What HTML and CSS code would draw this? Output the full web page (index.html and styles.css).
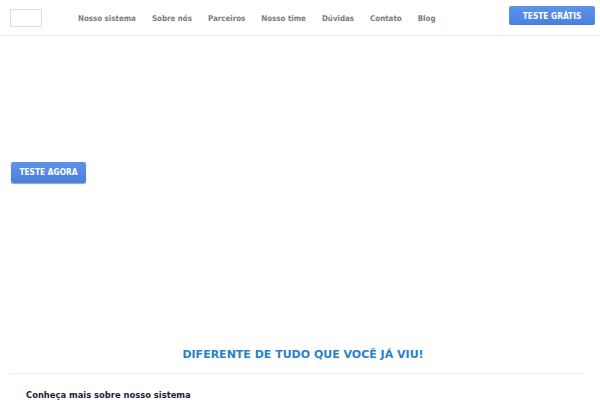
FILE: index.html
```html
<!DOCTYPE html>
<html lang="pt-BR">
<head>
<meta charset="utf-8">
<link rel="stylesheet" href="styles.css">
</head>
<body>
<header class="header">
  <div class="logo"></div>
  <nav class="nav">
    <a href="#">Nosso sistema</a>
    <a href="#">Sobre nós</a>
    <a href="#">Parceiros</a>
    <a href="#">Nosso time</a>
    <a href="#">Dúvidas</a>
    <a href="#">Contato</a>
    <a href="#">Blog</a>
  </nav>
  <a class="btn btn-top" href="#">TESTE GRÁTIS</a>
</header>
<section class="hero">
  <a class="btn btn-hero" href="#">TESTE AGORA</a>
</section>
<section class="intro">
  <h2 class="title">DIFERENTE DE TUDO QUE VOCÊ JÁ VIU!</h2>
  <div class="divider"></div>
  <h3 class="subtitle">Conheça mais sobre nosso sistema</h3>
</section>
</body>
</html>
```
FILE: styles.css
```css
* { box-sizing: border-box; }
html, body { margin: 0; padding: 0; background: #fff; }
body { font-family: "DejaVu Sans Condensed", "DejaVu Sans", sans-serif; font-weight: bold; }
.header {
  display: flex;
  align-items: center;
  height: 36px;
  padding: 0 5px 0 10px;
  border-bottom: 1px solid #eeeeee;
}
.logo {
  width: 32px;
  height: 18px;
  border: 1px solid #dcdcdc;
  background: #fff;
  margin-right: 36px;
}
.nav { display: flex; gap: 16px; flex: 1; padding-top: 1px; }
.nav a {
  font-size: 7.9px;
  color: #7b7b7b;
  text-decoration: none;
}
.btn {
  display: inline-flex;
  align-items: center;
  justify-content: center;
  color: #fff;
  text-decoration: none;
  font-size: 8.3px;
  background: linear-gradient(#5e93ea, #4a7fdf);
  border-radius: 2px;
}
.btn-top {
  width: 86px;
  height: 19px;
  margin-top: -4px;
  padding-top: 1px;
}
.btn-hero {
  width: 75px;
  height: 21px;
  box-shadow: 0 1px 1px rgba(20, 40, 90, 0.45);
}
.hero {
  height: 302px;
  padding: 124px 11px 0;
}
.intro { padding: 0 10px 0; }
.title {
  margin: 0;
  padding-left: 6px;
  text-align: center;
  font-family: "DejaVu Sans", sans-serif;
  font-size: 11px;
  color: #2a7fc7;
  line-height: 34px;
}
.divider { height: 1px; background: #efefef; margin: 1px 5px 0 0; }
.subtitle {
  margin: 0;
  padding: 15px 0 0 16px;
  font-size: 9.3px;
  color: #1c1c3a;
}
```
